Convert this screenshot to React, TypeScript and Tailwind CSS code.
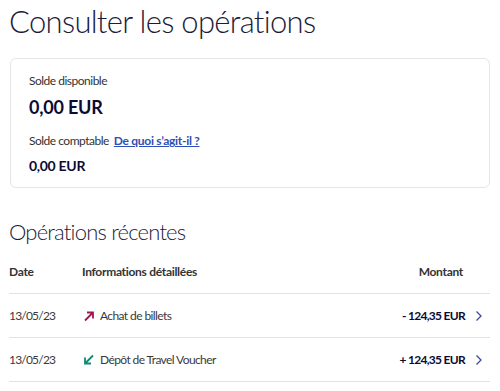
import React from "react";

const font = { fontFamily: 'Lato, "Noto Sans", sans-serif' };

function ArrowUpRight() {
  return (
    <svg width="12" height="12" viewBox="0 0 12 12" fill="none">
      <path d="M2 10.5L10 2.5M4 2.5H10V8.5" stroke="#a3174f" strokeWidth="1.8" />
    </svg>
  );
}
function ArrowDownLeft() {
  return (
    <svg width="12" height="12" viewBox="0 0 12 12" fill="none">
      <path d="M10 1.5L2 9.5M2 3.5V9.5H8" stroke="#0e8a72" strokeWidth="1.8" />
    </svg>
  );
}
function Chevron() {
  return (
    <svg width="8" height="12" viewBox="0 0 8 12" fill="none">
      <path d="M1.5 1.5L6 6L1.5 10.5" stroke="#3b4a9c" strokeWidth="1.3" />
    </svg>
  );
}

export default function App() {
  const rows = [
    { date: "13/05/23", icon: <ArrowUpRight />, label: "Achat de billets", amount: "- 124,35 EUR" },
    { date: "13/05/23", icon: <ArrowDownLeft />, label: "Dépôt de Travel Voucher", amount: "+ 124,35 EUR" },
  ];
  return (
    <div className="w-[500px] h-[391px] bg-white overflow-hidden px-[9px] text-[#1c1b3a]" style={font}>
      <h1 className="text-[31px] font-light leading-[44px] mt-[-1px] tracking-[-0.7px]">Consulter les opérations</h1>
      <div className="mt-[15px] ml-[1px] mr-[1px] h-[130px] rounded-[6px] border border-[#e6e6e6] pt-[14px] px-[18px]">
        <div className="text-[12px] text-[#333] leading-[16px] tracking-[-0.5px]">Solde disponible</div>
        <div className="text-[18px] font-bold leading-[26px] mt-[5px] text-[#0b0b33] tracking-[-0.2px]">0,00 EUR</div>
        <div className="flex items-center gap-[5px] mt-[13px] leading-[16px] tracking-[-0.5px]">
          <span className="text-[12px] text-[#333]">Solde comptable</span>
          <a className="text-[12px] font-bold text-[#2e4fb5] underline tracking-[-0.3px]">De quoi s’agit-il ?</a>
        </div>
        <div className="text-[14px] font-bold leading-[20px] mt-[7px] text-[#0b0b33] tracking-[-0.3px]">0,00 EUR</div>
      </div>
      <h2 className="text-[22px] font-light leading-[30px] mt-[29px] tracking-[-0.8px]">Opérations récentes</h2>
      <div className="mt-[3px] flex items-center h-[44px] text-[12px] font-bold text-[#333] border-b border-[#e3e3e3] mr-[1px] tracking-[-0.3px]">
        <div className="w-[73px]">Date</div>
        <div className="flex-1">Informations détaillées</div>
        <div className="pr-[27px]">Montant</div>
      </div>
      {rows.map((r, i) => (
        <div key={i} className="flex items-center h-[44px] text-[12px] text-[#3a3a3a] border-b border-[#e3e3e3] mr-[1px]">
          <div className="w-[74px] tracking-[-0.8px]">{r.date}</div>
          <div className="w-[17px] flex items-center">{r.icon}</div>
          <div className="flex-1 tracking-[-0.6px]">{r.label}</div>
          <div className="font-bold text-[#0b0b33] tracking-[-0.7px]">{r.amount}</div>
          <div className="w-[25px] flex justify-center pl-[3px]"><Chevron /></div>
        </div>
      ))}
    </div>
  );
}
